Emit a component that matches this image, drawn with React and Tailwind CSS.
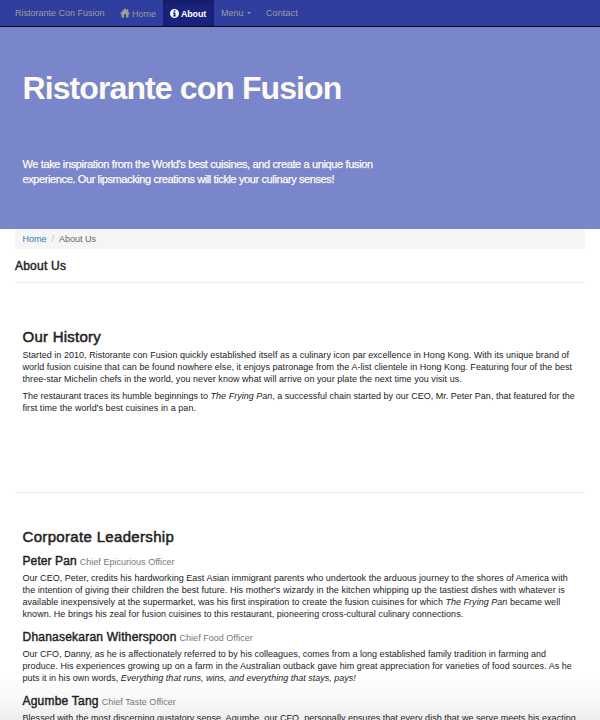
import React from "react";

function HomeIcon() {
  return (
    <svg className="mr-[2px] h-[10px] w-[10px]" viewBox="0 0 20 20" fill="currentColor" aria-hidden="true">
      <path d="M10 .6 20 10.800c.3.4.1.8-.4.8H17v6.900c0 .4-.2.6-.6.6H12v-6.600H8v6.600H3.600c-.4 0-.6-.2-.6-.6v-6.900H.4c-.5 0-.7-.4-.4-.8L10 .6ZM14 2h2.500v5L14 4.500V2Z" />
    </svg>
  );
}

function InfoIcon() {
  return (
    <svg className="mr-[2px] h-[9px] w-[9px]" viewBox="0 0 18 18" fill="currentColor" aria-hidden="true">
      <path fillRule="evenodd" d="M9 0a9 9 0 1 1 0 18A9 9 0 0 1 9 0ZM7.300 2.500v3.200h3.600V2.500H7.300ZM5.800 7.200v1.900h1.500v4H5.800v2h6.600v-2h-1.500V7.200H5.800Z" />
    </svg>
  );
}

function Line({ className = "tracking-[0.035px]", children }) {
  return <span className={"block whitespace-nowrap " + className}>{children}</span>;
}

function Person({ name, nameClass = "tracking-[0.22px]", title, className = "", children }) {
  return (
    <article className={className}>
      <h3 className="flex h-[14px] items-baseline text-[12px] leading-[14px] whitespace-nowrap [-webkit-text-stroke:0.42px]">
        <span className={nameClass}>{name}</span>
        <small className="ml-[3px] text-[9px] tracking-[0.02px] text-[#777] [-webkit-text-stroke:0px]">{title}</small>
      </h3>
      <p className="mt-[4px] leading-[12px]">{children}</p>
    </article>
  );
}

export default function App() {
  return (
    <div className="h-[720px] w-[600px] overflow-hidden bg-white bg-[linear-gradient(to_bottom,#fff_676px,#f9f9f9_698px,#eeeeee_720px)] font-['Liberation_Sans',Arial,sans-serif] text-[9px] text-[#222]">
      <nav className="flex h-[27px] border-b border-[#080808] bg-[#303f9f] text-[9px] leading-[26px] text-[#9d9d9d]">
        <a className="w-[112px] pl-[15px] whitespace-nowrap">Ristorante Con Fusion</a>
        <a className="flex w-[51px] items-center pl-[8px]"><HomeIcon /><span className="pt-[1px]">Home</span></a>
        <a className="flex w-[51px] items-center bg-[#1a237e] pl-[7px] font-bold text-white shadow-[inset_0_2px_6px_rgba(0,0,0,0.25)]"><InfoIcon /><span className="pt-[1px] tracking-[-0.2px]">About</span></a>
        <a className="flex w-[45px] items-center pl-[7px]">Menu<span className="ml-[3px] border-x-2 border-t-2 border-x-transparent border-t-current" /></a>
        <a className="pl-[7px] tracking-[0.12px]">Contact</a>
      </nav>

      <header className="h-[202px] bg-[#7986cb] pl-[22.5px] text-[#fffaf0]">
        <h1 className="pt-[43px] text-[32px] leading-[36px] font-bold tracking-[-0.9px] whitespace-nowrap">Ristorante con Fusion</h1>
        <p className="pt-[51px] text-[11px] leading-[15px] [-webkit-text-stroke:0.25px]">
          <Line className="tracking-[-0.36px]">We take inspiration from the World's best cuisines, and create a unique fusion</Line>
          <Line className="tracking-[-0.39px]">experience. Our lipsmacking creations will tickle your culinary senses!</Line>
        </p>
      </header>

      <main className="px-[15px]">
        <ol className="flex h-[20px] items-center rounded-[3px] bg-[#f5f5f5] px-[7.5px] pt-[1px]">
          <li className="text-[#337ab7]">Home</li>
          <li className="px-[5px] text-[#bbb]">/</li>
          <li className="text-[#666]">About Us</li>
        </ol>
        <h3 className="flex h-[34px] items-center border-b border-[#eee] text-[12px] tracking-[0.22px] [-webkit-text-stroke:0.42px]">About Us</h3>

        <section className="h-[210px] border-b border-[#eee] px-[7.5px] pt-[45px]">
          <h2 className="h-[18px] text-[15px] leading-[18px] tracking-[0.25px] [-webkit-text-stroke:0.5px]">Our History</h2>
          <p className="mt-[3px] leading-[12px]">
            <Line>Started in 2010, Ristorante con Fusion quickly established itself as a culinary icon par excellence in Hong Kong. With its unique brand of</Line>
            <Line className="tracking-[0.045px]">world fusion cuisine that can be found nowhere else, it enjoys patronage from the A-list clientele in Hong Kong. Featuring four of the best</Line>
            <Line className="tracking-[0.045px]">three-star Michelin chefs in the world, you never know what will arrive on your plate the next time you visit us.</Line>
          </p>
          <p className="mt-[5px] leading-[12px]">
            <Line className="tracking-[0.01px]">The restaurant traces its humble beginnings to <em>The Frying Pan</em>, a successful chain started by our CEO, Mr. Peter Pan, that featured for the</Line>
            <Line className="tracking-[0.06px]">first time the world's best cuisines in a pan.</Line>
          </p>
        </section>

        <section className="px-[7.5px] pt-[35px]">
          <h2 className="h-[18px] text-[15px] leading-[18px] tracking-[0.33px] [-webkit-text-stroke:0.5px]">Corporate Leadership</h2>
          <Person className="mt-[8px]" nameClass="tracking-[0.1px]" name="Peter Pan" title="Chief Epicurious Officer">
            <Line className="tracking-[0.03px]">Our CEO, Peter, credits his hardworking East Asian immigrant parents who undertook the arduous journey to the shores of America with</Line>
            <Line className="tracking-[0.06px]">the intention of giving their children the best future. His mother's wizardy in the kitchen whipping up the tastiest dishes with whatever is</Line>
            <Line className="tracking-[0.025px]">available inexpensively at the supermarket, was his first inspiration to create the fusion cuisines for which <em>The Frying Pan</em> became well</Line>
            <Line className="tracking-[0.04px]">known. He brings his zeal for fusion cuisines to this restaurant, pioneering cross-cultural culinary connections.</Line>
          </Person>
          <Person className="mt-[10px]" name="Dhanasekaran Witherspoon" title="Chief Food Officer">
            <Line className="tracking-[0.02px]">Our CFO, Danny, as he is affectionately referred to by his colleagues, comes from a long established family tradition in farming and</Line>
            <Line className="tracking-[0.045px]">produce. His experiences growing up on a farm in the Australian outback gave him great appreciation for varieties of food sources. As he</Line>
            <Line className="tracking-[0.008px]">puts it in his own words, <em>Everything that runs, wins, and everything that stays, pays!</em></Line>
          </Person>
          <Person className="mt-[10px]" name="Agumbe Tang" title="Chief Taste Officer">
            <Line className="tracking-[0.03px]">Blessed with the most discerning gustatory sense, Agumbe, our CFO, personally ensures that every dish that we serve meets his exacting</Line>
          </Person>
        </section>
      </main>
    </div>
  );
}
